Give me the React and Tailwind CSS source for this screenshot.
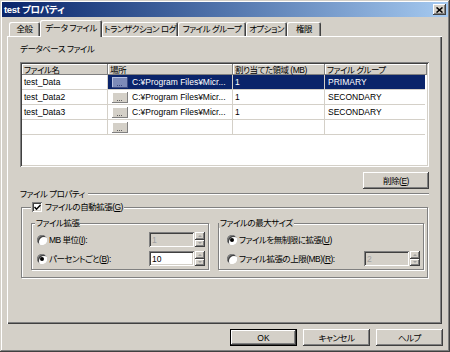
import React from "react";

const raised =
  "bg-[#d4d0c8] shadow-[inset_-1px_-1px_0_#404040,inset_1px_1px_0_#ffffff,inset_-2px_-2px_0_#808080,inset_2px_2px_0_#d4d0c8]";
const sunken =
  "shadow-[inset_1px_1px_0_#808080,inset_-1px_-1px_0_#ffffff,inset_2px_2px_0_#404040,inset_-2px_-2px_0_#d4d0c8]";
const etched = "border border-[#808080] shadow-[1px_1px_0_#ffffff,inset_1px_1px_0_#ffffff]";

const tabs = [
  { label: "全般", w: "w-[31px]" },
  { label: "データ ファイル", w: "w-[62px]", active: true },
  { label: "トランザクション ログ", w: "w-[76px]" },
  { label: "ファイル グループ", w: "w-[68px]" },
  { label: "オプション", w: "w-[41px]" },
  { label: "権限", w: "w-[34px]" },
];

const rows = [
  { name: "test_Data", path: "C:¥Program Files¥Micr...", size: "1", group: "PRIMARY", selected: true },
  { name: "test_Data2", path: "C:¥Program Files¥Micr...", size: "1", group: "SECONDARY" },
  { name: "test_Data3", path: "C:¥Program Files¥Micr...", size: "1", group: "SECONDARY" },
  { name: "", path: "", size: "", group: "" },
];

const Radio = ({ checked }) => (
  <span className="relative w-[10px] h-[10px] rounded-full bg-white shadow-[inset_1px_1px_0_#808080,inset_-1px_-1px_0_#ffffff,inset_2px_2px_0_#404040] flex items-center justify-center shrink-0">
    {checked && <span className="w-[4px] h-[4px] rounded-full bg-black" />}
  </span>
);

const Spin = ({ value, disabled }) => (
  <div className="flex items-center gap-[1px] tracking-normal">
    <div className={`w-[45px] h-[15px] ${sunken} ${disabled ? "bg-[#d4d0c8] text-[#a0a0a0]" : "bg-white text-black"} flex items-center pl-[3px]`}>
      {value}
    </div>
    <div className="flex flex-col w-[10px] h-[15px]">
      <div className={`flex-1 ${raised} flex items-center justify-center`}>
        <span className="w-0 h-0 border-x-[2px] border-x-transparent border-b-[2px] border-b-[#a0a0a0]" />
      </div>
      <div className={`flex-1 ${raised} flex items-center justify-center`}>
        <span className="w-0 h-0 border-x-[2px] border-x-transparent border-t-[2px] border-t-[#a0a0a0]" />
      </div>
    </div>
  </div>
);

const Dots = ({ color }) => (
  <div className="flex gap-[1px]">
    <span className={`w-[1px] h-[1px] ${color}`} />
    <span className={`w-[1px] h-[1px] ${color}`} />
    <span className={`w-[1px] h-[1px] ${color}`} />
  </div>
);

const U = ({ children }) => <span className="underline underline-offset-1">{children}</span>;

export default function App() {
  return (
    <div className="w-[450px] h-[352px] bg-[#d4d0c8] p-[2px] flex flex-col text-[8.5px] leading-[10px] tracking-[-0.5px] text-black font-['Liberation_Sans','Noto_Sans_CJK_JP',sans-serif] [font-feature-settings:'palt'] shadow-[inset_-1px_-1px_0_#404040,inset_1px_1px_0_#d4d0c8,inset_-2px_-2px_0_#808080,inset_2px_2px_0_#ffffff] overflow-hidden">
      {/* title bar */}
      <div className="h-[15px] flex items-center justify-between pl-[2px] pr-[2px] bg-linear-to-r from-[#0a246a] to-[#a6caf0]">
        <span className="text-white font-bold text-[9.5px] tracking-[-0.3px]">test プロパティ</span>
        <div className={`w-[13px] h-[11px] ${raised} flex items-center justify-center`}>
          <svg width="7" height="6" viewBox="0 0 7 6">
            <path d="M0.5 0.5 L6.5 5.5 M6.5 0.5 L0.5 5.5" stroke="#000" strokeWidth="1.6" />
          </svg>
        </div>
      </div>

      <div className="flex flex-col pl-[5px] pr-[6px]">
        {/* tabs */}
        <div className="mt-[3px] h-[16px] flex items-end pl-[2px]">
          {tabs.map((t) => (
            <div
              key={t.label}
              className={`${t.w} flex items-center justify-center whitespace-nowrap rounded-t-[2px] bg-[#d4d0c8] shadow-[inset_1px_1px_0_#ffffff,inset_-1px_0_0_#404040,inset_-2px_0_0_#808080] ${
                t.active ? "h-[17px] -mb-[1px] relative z-10 pb-[1px]" : "h-[14px]"
              }`}
            >
              {t.label}
            </div>
          ))}
        </div>

        {/* tab panel */}
        <div className="h-[288px] flex flex-col pl-[13px] pr-[13px] shadow-[inset_1px_1px_0_#ffffff,inset_-1px_-1px_0_#404040,inset_-2px_-2px_0_#808080]">
          <div className="mt-[8px] h-[10px]">データベース ファイル</div>

          {/* grid */}
          <div className={`mt-[8px] w-[409px] h-[105px] bg-white p-[2px] ${sunken}`}>
            <div className="flex h-[11px]">
              {[
                ["ファイル名", "w-[86px]"],
                ["場所", "w-[125px]"],
                ["割り当てた領域 (MB)", "w-[92px]"],
                ["ファイル グループ", "flex-1"],
              ].map(([h, w]) => (
                <div key={h} className={`${w} bg-[#d4d0c8] pl-[2px] flex items-center whitespace-nowrap shadow-[inset_-1px_-1px_0_#808080,inset_1px_1px_0_#ffffff]`}>
                  {h}
                </div>
              ))}
            </div>
            {rows.map((r, i) => (
              <div key={i} className="flex h-[15px] border-b border-[#d4d0c8] w-[403px] tracking-normal">
                <div className="w-[86px] pl-[2px] flex items-center border-r border-[#d4d0c8]">{r.name}</div>
                <div className={`w-[125px] flex items-center border-r border-[#d4d0c8] ${r.selected ? "bg-[#0a246a] text-white" : ""}`}>
                  <div className="w-[23px] flex justify-center shrink-0">
                    <div className={`w-[16px] h-[11px] flex items-end justify-center pb-[2px] ${r.selected ? "bg-[#7d8bb8] shadow-[inset_-1px_-1px_0_#3b4a80,inset_1px_1px_0_#b8c2e0]" : "bg-[#d4d0c8] shadow-[inset_-1px_-1px_0_#808080,inset_1px_1px_0_#ffffff]"}`}>
                      <Dots color={r.selected ? "bg-[#3b4a80]" : "bg-[#606060]"} />
                    </div>
                  </div>
                  <span className="pl-[1px] whitespace-nowrap overflow-hidden">{r.path}</span>
                </div>
                <div className={`w-[92px] pl-[2px] flex items-center border-r border-[#d4d0c8] ${r.selected ? "bg-[#0a246a] text-white" : ""}`}>{r.size}</div>
                <div className={`flex-1 pl-[3px] flex items-center ${r.selected ? "bg-[#0a246a] text-white" : ""}`}>{r.group}</div>
              </div>
            ))}
          </div>

          {/* delete button */}
          <div className="flex justify-end w-[409px] mt-[5px]">
            <div className={`w-[66px] h-[17px] ${raised} flex items-center justify-center`}>
              削除(<U>E</U>)
            </div>
          </div>

          {/* file properties */}
          <div className="flex items-center h-[10px] w-[409px]">
            <span className="whitespace-nowrap pr-[3px]">ファイル プロパティ</span>
            <div className="flex-1 border-t border-[#808080] border-b border-b-white" />
          </div>

          <div className={`relative mt-[8px] ml-[1px] w-[407px] h-[71px] ${etched} pt-[15px] pl-[9px] flex gap-[9px]`}>
            <div className="absolute -top-[6px] left-[9px] bg-[#d4d0c8] px-[1px] flex items-center gap-[3px]">
              <span className={`w-[10px] h-[10px] bg-white ${sunken} flex items-center justify-center`}>
                <svg width="7" height="7" viewBox="0 0 7 7">
                  <path d="M0.5 3 L2.5 5.2 L6.5 1" stroke="#000" strokeWidth="1.5" fill="none" />
                </svg>
              </span>
              <span>ファイルの自動拡張(<U>G</U>)</span>
            </div>

            {/* growth */}
            <div className={`relative w-[178px] h-[47px] ${etched} pt-[8px] pl-[5px] flex flex-col gap-[4px]`}>
              <span className="absolute -top-[6px] left-[3px] bg-[#d4d0c8] px-[1px]">ファイル拡張</span>
              <div className="flex items-center h-[15px]">
                <Radio />
                <span className="ml-[2px] w-[100px]">MB 単位(<U>I</U>):</span>
                <Spin value="1" disabled />
              </div>
              <div className="flex items-center h-[15px]">
                <Radio checked />
                <span className="ml-[2px] w-[100px]">パーセントごと(<U>B</U>):</span>
                <Spin value="10" />
              </div>
            </div>

            {/* max size */}
            <div className={`relative w-[206px] h-[47px] ${etched} pt-[8px] pl-[8px] flex flex-col gap-[4px]`}>
              <span className="absolute -top-[6px] left-[0px] bg-[#d4d0c8] px-[1px]">ファイルの最大サイズ</span>
              <div className="flex items-center h-[15px]">
                <Radio checked />
                <span className="ml-[2px]">ファイルを無制限に拡張(<U>U</U>)</span>
              </div>
              <div className="flex items-center h-[15px]">
                <Radio />
                <span className="ml-[2px] w-[125px]">ファイル拡張の上限(MB)(<U>R</U>):</span>
                <Spin value="2" disabled />
              </div>
            </div>
          </div>
        </div>

        {/* dialog buttons */}
        <div className="mt-[5px] flex justify-end gap-[6px] -mr-[1px]">
          <div className={`w-[67px] h-[17px] ${raised} border border-black flex items-center justify-center tracking-normal`}>OK</div>
          <div className={`w-[67px] h-[17px] ${raised} flex items-center justify-center`}>キャンセル</div>
          <div className={`w-[67px] h-[17px] ${raised} flex items-center justify-center`}>ヘルプ</div>
        </div>
      </div>
    </div>
  );
}
